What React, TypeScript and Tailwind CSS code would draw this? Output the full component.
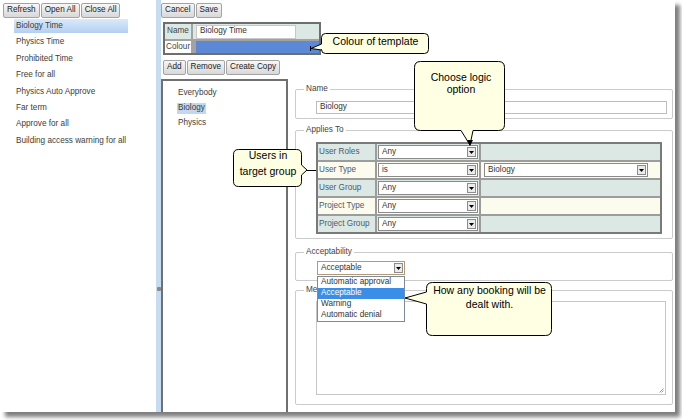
import React from "react";

const treeItems = [
  "Biology Time",
  "Physics Time",
  "Prohibited Time",
  "Free for all",
  "Physics Auto Approve",
  "Far term",
  "Approve for all",
  "Building access warning for all",
];

const rules = [
  { label: "User Roles", op: "Any", teal: true, value: "" },
  { label: "User Type", op: "is", teal: false, value: "Biology" },
  { label: "User Group", op: "Any", teal: true, value: "" },
  { label: "Project Type", op: "Any", teal: false, value: "" },
  { label: "Project Group", op: "Any", teal: true, value: "" },
];

const options = ["Automatic approval", "Acceptable", "Warning", "Automatic denial"];

function Btn({ label }: { label: string }) {
  return (
    <div className="h-[15px] px-[3px] flex items-center border border-[#a3a3a3] rounded-[2px] bg-gradient-to-b from-[#f7f7f7] to-[#d8d8d8] text-[#222]">
      {label}
    </div>
  );
}

function DropBtn() {
  return (
    <div className="w-[9px] h-[10px] flex items-center justify-center bg-[#ebebeb] border border-[#8c8c8c]">
      <svg width="5" height="3" viewBox="0 0 5 3">
        <path d="M0 0h5L2.5 3z" fill="#000" />
      </svg>
    </div>
  );
}

function Select({ value, className }: { value: string; className: string }) {
  return (
    <div className={`flex items-center bg-white border ${className}`}>
      <span className="flex-1 pl-[3px] text-[#333]">{value}</span>
      <div className="pr-[1px]">
        <DropBtn />
      </div>
    </div>
  );
}

// rounded box with a pointer on one side
function bubble(
  x: number,
  y: number,
  w: number,
  h: number,
  r: number,
  side: "left" | "right" | "bottom",
  a: number,
  b: number,
  tx: number,
  ty: number
) {
  let d = `M${x + r} ${y} H${x + w - r} Q${x + w} ${y} ${x + w} ${y + r} `;
  if (side === "right") d += `V${a} L${tx} ${ty} L${x + w} ${b} `;
  d += `V${y + h - r} Q${x + w} ${y + h} ${x + w - r} ${y + h} `;
  if (side === "bottom") d += `H${b} L${tx} ${ty} L${a} ${y + h} `;
  d += `H${x + r} Q${x} ${y + h} ${x} ${y + h - r} `;
  if (side === "left") d += `V${b} L${tx} ${ty} L${x} ${a} `;
  d += `V${y + r} Q${x} ${y} ${x + r} ${y} Z`;
  return d;
}

export default function App() {
  return (
    <div className="relative w-[682px] h-[420px] bg-white overflow-hidden font-['Liberation_Sans',Arial,sans-serif] text-[8.2px] leading-none text-[#333]">
      <div className="flex w-[675px] h-[412px] bg-white shadow-[5px_5px_4px_rgba(0,0,0,0.5)]">
        {/* template tree */}
        <div className="w-[156px] flex flex-col">
          <div className="flex gap-[1px] pl-[3px] pt-[3px]">
            <Btn label="Refresh" />
            <Btn label="Open All" />
            <Btn label="Close All" />
          </div>
          <div className="flex flex-col">
            {treeItems.map((t, i) => (
              <div key={t} className="h-[16.4px] flex items-center">
                <div
                  className={`ml-[14px] w-[114px] h-[14px] pl-[2px] flex items-center text-[#3c3c3c] ${
                    i === 0 ? "bg-gradient-to-b from-[#dbe9fb] to-[#b3d0f1]" : ""
                  }`}
                >
                  {t}
                </div>
              </div>
            ))}
          </div>
        </div>

        {/* splitter */}
        <div className="w-[5px] bg-[#c6dcf2] flex justify-center pt-[287px]">
          <div className="w-[4px] h-[4px] rounded-[1px] bg-[#8a8a8a]" />
        </div>

        {/* editor */}
        <div className="flex-1 flex flex-col min-w-0">
          <div className="flex gap-[1px] pt-[3px]">
            <Btn label="Cancel" />
            <Btn label="Save" />
          </div>

          <div className="mt-[4px] ml-[2px] w-[158px] grid grid-cols-[26px_1fr] gap-[2px] border-2 border-[#6e6e6e] bg-[#a2a2a2]">
            <div className="h-[15px] flex items-center pl-[2px] bg-[#dbe8e4] text-[#444]">Name</div>
            <div className="h-[15px] flex items-center bg-[#dbe8e4] pl-[3px]">
              <div className="w-[100px] h-[14px] flex items-center pl-[3px] bg-white border border-[#c8c8c8]">Biology Time</div>
            </div>
            <div className="h-[12px] flex items-center pl-[1px] bg-white text-[#444]">Colour</div>
            <div className="h-[12px] bg-[#5b89d6] ml-[3px]" />
          </div>

          <div className="mt-[5px] ml-[2px] flex gap-[1px]">
            <Btn label="Add" />
            <Btn label="Remove" />
            <Btn label="Create Copy" />
          </div>

          <div className="mt-[4px] flex flex-1 gap-[7px]">
            {/* rule list */}
            <div className="w-[127px] border-2 border-b-0 border-[#707070] pt-[5px]">
              {["Everybody", "Biology", "Physics"].map((t, i) => (
                <div key={t} className="h-[15px] flex items-center pl-[14px]">
                  <span className={`px-[1px] py-[1px] text-[#3c3c3c] ${i === 1 ? "bg-[#c3d8ee]" : ""}`}>{t}</span>
                </div>
              ))}
            </div>

            {/* rule form */}
            <div className="w-[378px] flex flex-col">
              <fieldset className="mt-[5px] border border-[#cbcbcb] rounded-[2px]">
                <legend className="ml-[8px] px-[2px] h-[10px] leading-[10px] text-[#444]">Name</legend>
                <div className="pl-[20px] pt-[7px] pb-[4px]">
                  <div className="w-[351px] h-[13px] flex items-center pl-[3px] border border-[#bdbdbd] text-[#333]">Biology</div>
                </div>
              </fieldset>

              <fieldset className="mt-[6px] border border-[#cbcbcb] rounded-[2px]">
                <legend className="ml-[8px] px-[2px] h-[10px] leading-[10px] text-[#444]">Applies To</legend>
                <div className="pl-[20px] pt-[7px] pb-[4px]">
                  <div className="w-[346px] grid grid-cols-[57px_102px_179px] gap-[2px] border-2 border-[#7a7a7a] bg-[#9c9c9c]">
                    {rules.map((r) => (
                      <React.Fragment key={r.label}>
                        <div className={`h-[16px] flex items-center pl-[1px] text-[#4c5a6e] ${r.teal ? "bg-[#dbe8e4]" : "bg-[#fbfbee]"}`}>
                          {r.label}
                        </div>
                        <div className={`h-[16px] p-[1px] ${r.teal ? "bg-[#dbe8e4]" : "bg-[#fbfbee]"}`}>
                          <Select value={r.op} className="h-[14px] w-full border-[#8a8a8a]" />
                        </div>
                        <div className={`h-[16px] flex items-center pl-[3px] ${r.teal ? "bg-[#dbe8e4]" : "bg-[#fbfbee]"}`}>
                          {r.value && <Select value={r.value} className="h-[14px] w-[164px] border-[#8a8a8a]" />}
                        </div>
                      </React.Fragment>
                    ))}
                  </div>
                </div>
              </fieldset>

              <fieldset className="mt-[8px] border border-[#cbcbcb] rounded-[2px]">
                <legend className="ml-[8px] px-[2px] h-[10px] leading-[10px] text-[#444]">Acceptability</legend>
                <div className="pl-[21px] pt-[4px] pb-[5px]">
                  <div className="relative w-[88px]">
                    <Select value="Acceptable" className="h-[14px] w-[88px] border-[#b09a78]" />
                    <div className="absolute left-0 top-[15px] z-10 w-[88px] bg-white border border-[#7f8a99]">
                      {options.map((o, i) => (
                        <div
                          key={o}
                          className={`h-[11px] flex items-center pl-[3px] ${i === 1 ? "bg-[#3b8ee8] text-white" : "text-[#333]"}`}
                        >
                          {o}
                        </div>
                      ))}
                    </div>
                  </div>
                </div>
              </fieldset>

              <fieldset className="mt-[4px] border border-[#cbcbcb] rounded-[2px]">
                <legend className="ml-[8px] px-[2px] h-[10px] leading-[10px] text-[#444]">Message</legend>
                <div className="pl-[20px] pt-[6px] pb-[9px]">
                  <div className="relative w-[350px] h-[94px] border border-[#c6c6c6]">
                    <svg className="absolute right-[1px] bottom-[1px]" width="6" height="6" viewBox="0 0 6 6">
                      <path d="M5.5 1.5L1.5 5.5M5.5 3.5L3.5 5.5" stroke="#9a9a9a" strokeWidth="1" />
                    </svg>
                  </div>
                </div>
              </fieldset>
            </div>
          </div>
        </div>
      </div>

      {/* callouts */}
      <svg className="absolute left-0 top-0 pointer-events-none" width="682" height="420">
        <g fill="#ffffe3" stroke="#000" strokeWidth="1" strokeLinejoin="round">
          <path d={bubble(321.5, 33.5, 107, 20, 4, "left", 44, 50, 311, 48.5)} />
          <path d={bubble(414.5, 61.5, 90, 69, 6, "bottom", 461, 473, 470, 145)} />
          <path d={bubble(233.5, 149.5, 68, 37, 5, "right", 165, 175, 307, 170)} />
          <path d={bubble(426.5, 282.5, 125, 53, 6, "left", 292, 304, 405, 298)} />
        </g>
        <path d="M310.5 46v5" stroke="#000" strokeWidth="1" />
        <path d="M467 140h6l-3 6z" fill="#000" />
        <path d="M307 170.5h9" stroke="#000" strokeWidth="1" />
      </svg>
      <div className="absolute left-[322px] top-[35px] w-[107px] text-center text-[10.5px] leading-[12px] text-black">
        Colour of template
      </div>
      <div className="absolute left-[415px] top-[71px] w-[92px] text-center text-[10.5px] leading-[12px] text-black">
        Choose logic
        <br />
        option
      </div>
      <div className="absolute left-[234px] top-[147px] w-[68px] text-center text-[10.5px] leading-[16px] text-black">
        Users in
        <br />
        target group
      </div>
      <div className="absolute left-[427px] top-[284px] w-[125px] text-center text-[10.5px] leading-[13.5px] text-black">
        How any booking will be
        <br />
        dealt with.
      </div>
    </div>
  );
}
